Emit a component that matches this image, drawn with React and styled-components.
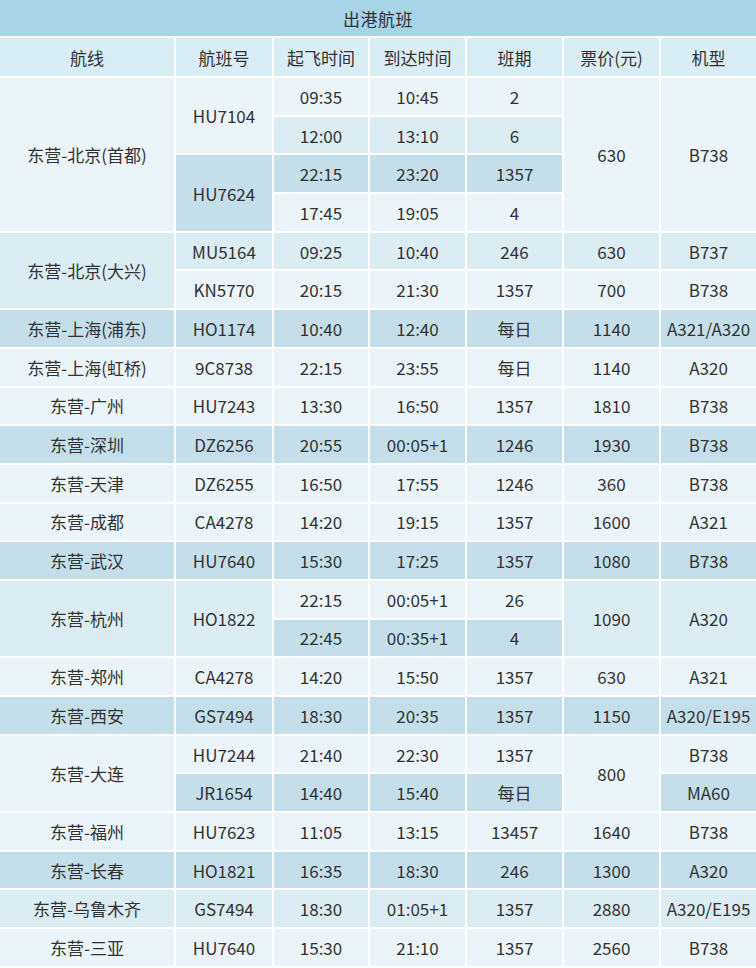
import React from "react";
import styled, { createGlobalStyle } from "styled-components";

const GlobalStyle = createGlobalStyle`
  html, body { margin: 0; padding: 0; background: #ffffff; }
  body { font-family: "Noto Sans CJK SC", "Noto Sans", sans-serif; color: #333; }
`;

const TONES = {
  head: "#d9edf5",
  dark: "#c4dfea",
  mid: "#dbecf3",
  light: "#ebf4f9",
};

const Page = styled.div`
  width: 756px;
  height: 968px;
  overflow: hidden;
  display: flex;
  flex-direction: column;
  gap: 2px;
  background: #ffffff;
`;

const TitleBar = styled.div`
  height: 36px;
  background: #a7d4e6;
  display: flex;
  align-items: center;
  justify-content: center;
  font-size: 17px;
  color: #333;
  letter-spacing: 0.5px;
`;

const Grid = styled.div`
  display: grid;
  grid-template-columns: 174px 96px 94px 95px 95px 95px 95px;
  grid-auto-rows: 36.7px;
  gap: 2px;
`;

const HeaderGrid = styled(Grid)`
  grid-auto-rows: 38px;
`;

const Cell = styled.div`
  grid-row: span ${(p) => p.$span || 1};
  background: ${(p) => TONES[p.$tone]};
  display: flex;
  align-items: center;
  justify-content: center;
  font-size: 17px;
  color: #333;
  white-space: nowrap;
  line-height: 1;
`;

const headers = ["航线", "航班号", "起飞时间", "到达时间", "班期", "票价(元)", "机型"];

// rows: each is array of [text, tone, span]
const D = "dark", M = "mid", L = "light";
const rows = [
  [["东营-北京(首都)", L, 4], ["HU7104", L, 2], ["09:35", L], ["10:45", L], ["2", L], ["630", L, 4], ["B738", L, 4]],
  [["12:00", M], ["13:10", M], ["6", M]],
  [["HU7624", D, 2], ["22:15", D], ["23:20", D], ["1357", D]],
  [["17:45", L], ["19:05", L], ["4", L]],
  [["东营-北京(大兴)", M, 2], ["MU5164", M], ["09:25", M], ["10:40", M], ["246", M], ["630", M], ["B737", M]],
  [["KN5770", L], ["20:15", L], ["21:30", L], ["1357", L], ["700", L], ["B738", L]],
  [["东营-上海(浦东)", D], ["HO1174", D], ["10:40", D], ["12:40", D], ["每日", D], ["1140", D], ["A321/A320", D]],
  [["东营-上海(虹桥)", L], ["9C8738", L], ["22:15", L], ["23:55", L], ["每日", L], ["1140", L], ["A320", L]],
  [["东营-广州", L], ["HU7243", L], ["13:30", L], ["16:50", L], ["1357", L], ["1810", L], ["B738", L]],
  [["东营-深圳", D], ["DZ6256", D], ["20:55", D], ["00:05+1", D], ["1246", D], ["1930", D], ["B738", D]],
  [["东营-天津", L], ["DZ6255", L], ["16:50", L], ["17:55", L], ["1246", L], ["360", L], ["B738", L]],
  [["东营-成都", L], ["CA4278", L], ["14:20", L], ["19:15", L], ["1357", L], ["1600", L], ["A321", L]],
  [["东营-武汉", D], ["HU7640", D], ["15:30", D], ["17:25", D], ["1357", D], ["1080", D], ["B738", D]],
  [["东营-杭州", M, 2], ["HO1822", M, 2], ["22:15", L], ["00:05+1", L], ["26", L], ["1090", M, 2], ["A320", M, 2]],
  [["22:45", D], ["00:35+1", D], ["4", D]],
  [["东营-郑州", L], ["CA4278", L], ["14:20", L], ["15:50", L], ["1357", L], ["630", L], ["A321", L]],
  [["东营-西安", D], ["GS7494", D], ["18:30", D], ["20:35", D], ["1357", D], ["1150", D], ["A320/E195", D]],
  [["东营-大连", L, 2], ["HU7244", L], ["21:40", L], ["22:30", L], ["1357", L], ["800", L, 2], ["B738", L]],
  [["JR1654", D], ["14:40", D], ["15:40", D], ["每日", D], ["MA60", D]],
  [["东营-福州", L], ["HU7623", L], ["11:05", L], ["13:15", L], ["13457", L], ["1640", L], ["B738", L]],
  [["东营-长春", D], ["HO1821", D], ["16:35", D], ["18:30", D], ["246", D], ["1300", D], ["A320", D]],
  [["东营-乌鲁木齐", M], ["GS7494", M], ["18:30", M], ["01:05+1", M], ["1357", M], ["2880", M], ["A320/E195", M]],
  [["东营-三亚", L], ["HU7640", L], ["15:30", L], ["21:10", L], ["1357", L], ["2560", L], ["B738", L]],
];

export default function App() {
  return (
    <>
      <GlobalStyle />
      <Page>
        <TitleBar>出港航班</TitleBar>
        <HeaderGrid>
          {headers.map((h) => (
            <Cell key={h} $tone="head">{h}</Cell>
          ))}
        </HeaderGrid>
        <Grid>
          {rows.flatMap((r, ri) =>
            r.map(([text, tone, span], ci) => (
              <Cell key={`${ri}-${ci}`} $tone={tone} $span={span}>
                {text}
              </Cell>
            ))
          )}
        </Grid>
      </Page>
    </>
  );
}
